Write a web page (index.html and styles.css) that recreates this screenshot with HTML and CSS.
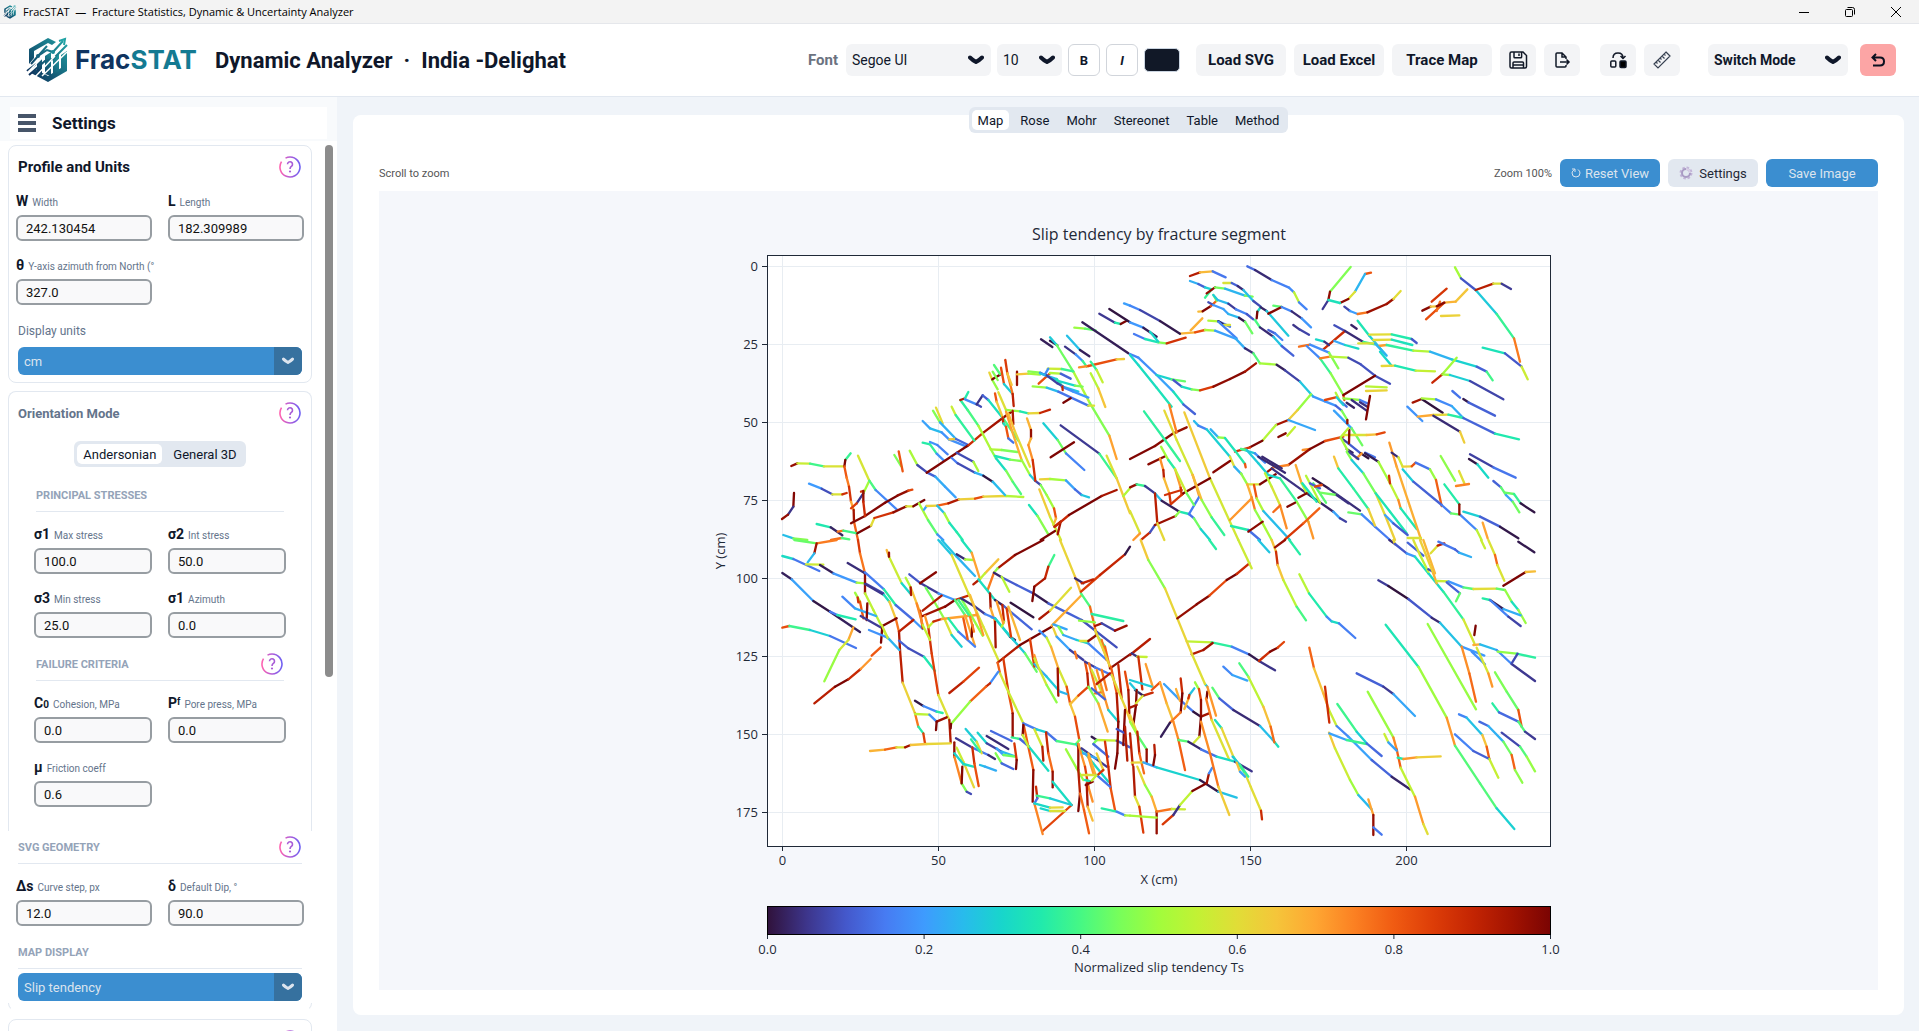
FILE: index.html
```html
<!DOCTYPE html>
<html lang="en">
<head>
<meta charset="utf-8">
<title>FracSTAT — Fracture Statistics, Dynamic &amp; Uncertainty Analyzer</title>
<link rel="stylesheet" href="styles.css">
</head>
<body>
<svg width="0" height="0" class="defs" aria-hidden="true">
  <defs>
    <linearGradient id="brand" x1="0" y1="1" x2="1" y2="0"><stop offset="0" stop-color="#0c2c58"/><stop offset="1" stop-color="#22a3a5"/></linearGradient>
    <linearGradient id="help-ring" x1="0" y1="0" x2="1" y2="0"><stop offset="0" stop-color="#ff63b0"/><stop offset=".5" stop-color="#b05cd8"/><stop offset="1" stop-color="#6f60f2"/></linearGradient>
    <symbol id="logo" viewBox="0 0 46 46">
      <path d="M4 12 23 1l8 4-4 3-4-2L9 14v7l-5 6zM42 14v20L23 45 6 36l4-4 13 7 13-8V18z" fill="url(#brand)"/>
      <path d="M12 26l5-4v15l-5-3zM20 19l6-4v24l-6-2zM28 21l6-5v18l-6 4z" fill="url(#brand)"/>
      <path d="M6 27 22 9m-20 25 9-7m2-8 9-6 6 2 10-11M4 38 20 24l8-2 14-14" fill="none" stroke="url(#brand)" stroke-width="2"/>
      <path d="M1 37 19 19M17 39l25-24M9 41 30 19" stroke="#fff" stroke-width="1.500"/>
      <path d="M34 4l6-2-1 6" fill="none" stroke="#22a3a5" stroke-width="2"/>
      <circle cx="13" cy="19" r="2" fill="#18627f"/><circle cx="28" cy="15" r="2" fill="#1b8a98"/>
    </symbol>
    <symbol id="chevron" viewBox="0 0 16 10"><path d="M2 2.500Q5 5.500 8 7 11 5.500 14 2.500" fill="none" stroke="currentColor" stroke-width="4" stroke-linecap="round" stroke-linejoin="round"/></symbol>
    <symbol id="help" viewBox="0 0 22 22">
      <path d="M5.600 2.500A10 10 0 1 0 11 1Q9 1 7.600 1.600M3.500 4.500 2.600 5.600" fill="none" stroke="none"/>
      <path d="M6.500 2.100A10 10 0 0 1 11 1a10 10 0 1 1-8.500 4.700" fill="none" stroke="url(#help-ring)" stroke-width="1.600"/>
      <path d="M8.500 8.300a2.500 2.500 0 1 1 4 2Q11 11.200 11 13" fill="none" stroke="#a85cd6" stroke-width="1.600"/><circle cx="11" cy="15.500" r="1.100" fill="#a85cd6"/>
    </symbol>
  </defs>
</svg>

<div class="titlebar">
  <svg class="titlebar-icon"><use href="#logo"/></svg>
  <span class="titlebar-text">FracSTAT &nbsp;—&nbsp; Fracture Statistics, Dynamic &amp; Uncertainty Analyzer</span>
  <div class="window-controls">
    <button aria-label="Minimize"><svg width="12" height="12" viewBox="0 0 12 12"><path d="M1 6.500h10" stroke="#000"/></svg></button>
    <button aria-label="Restore"><svg width="12" height="12" viewBox="0 0 12 12" fill="none" stroke="#000"><rect x="1.500" y="3.500" width="7" height="7" rx="1"/><path d="M3.500 1.500h5q2 0 2 2v5"/></svg></button>
    <button aria-label="Close"><svg width="12" height="12" viewBox="0 0 12 12"><path d="M1 1l10 10M11 1 1 11" stroke="#000"/></svg></button>
  </div>
</div>

<header class="header">
  <div class="brand">
    <svg class="brand-mark"><use href="#logo"/></svg>
    <span class="brand-name">Frac<span class="brand-stat">STAT</span></span>
  </div>
  <h1 class="page-title">Dynamic Analyzer &nbsp;·&nbsp; India -Delighat</h1>
  <div class="toolbar">
    <div class="tool-group tool-font">
      <label class="font-label" for="font">Font</label>
      <div class="combo combo-font"><select id="font"><option>Segoe UI</option></select><svg><use href="#chevron"/></svg></div>
      <div class="combo combo-size"><select aria-label="Font size"><option>10</option></select><svg><use href="#chevron"/></svg></div>
      <button class="style-btn">B</button>
      <button class="style-btn italic">I</button>
      <button class="swatch" aria-label="Font colour"></button>
    </div>
    <div class="tool-group">
      <button class="tool">Load SVG</button>
      <button class="tool">Load Excel</button>
      <button class="tool tool-wide">Trace Map</button>
      <button class="tool tool-icon" aria-label="Save"><svg width="20" height="20" viewBox="0 0 20 20" fill="none" stroke="#111827" stroke-width="1.500"><path d="M2 3.500Q2 2 3.500 2H15l3.500 3.500V16.500Q18.500 18 17 18H3.500Q2 18 2 16.500zM6 2v5q0 .8.800.800h6q.8 0 .8-.8V2M11 3.500V6M5 18v-5q0-1 1-1h8.500q1 0 1 1v5M5 15h10"/></svg></button>
      <button class="tool tool-icon" aria-label="Export"><svg width="18" height="18" viewBox="0 0 18 18" fill="none" stroke="#111827" stroke-width="1.500"><path d="M13 8V6L9 2H4Q3 2 3 3v12q0 1 1 1h8q1 0 1-1v-1M9 2v4h4M7 11h9M13.500 8.500 16 11l-2.500 2.500"/></svg></button>
    </div>
    <div class="tool-group tool-edit">
      <button class="tool tool-icon" aria-label="Swap"><svg width="18" height="18" viewBox="0 0 18 18" fill="none" stroke="#111827" stroke-width="1.500"><rect x="1.800" y="10" width="5" height="6" rx="1"/><rect x="11" y="10" width="6" height="6.500" rx="1" fill="#000"/><path d="M4 7q0-5 5-5t5 5M11.500 5 14 7.500 16.500 5"/></svg></button>
      <button class="tool tool-icon" aria-label="Measure"><svg width="20" height="20" viewBox="0 0 20 20" fill="none" stroke="#374151" stroke-width="1.200"><path d="M14 2l4 4L6 18l-4-4zM12 4l1.500 1.500M10 6l2.500 2.500M8 8l1.500 1.500M6 10l2.500 2.500M4 12l1.500 1.500"/></svg></button>
    </div>
    <div class="tool-group tool-end">
      <div class="combo combo-mode"><select aria-label="Mode"><option>Switch Mode</option></select><svg><use href="#chevron"/></svg></div>
      <button class="tool tool-icon undo" aria-label="Undo"><svg width="16" height="16" viewBox="0 0 16 16" fill="none" stroke="#0b1120" stroke-width="2"><path d="M6 2 2.500 5.500 6 9M3 5.500h7q4 0 4 4t-4 4H3"/></svg></button>
    </div>
  </div>
</header>

<div class="body">
  <aside class="sidebar">
    <div class="side-head">
      <button class="menu" aria-label="Toggle settings"><span></span><span></span><span></span></button>
      <h2>Settings</h2>
    </div>
    <div class="side-scroll">
      <div class="side-content">
        <section class="group">
          <div class="group-head"><h3 class="strong">Profile and Units</h3><button class="help" aria-label="Help"><svg><use href="#help"/></svg></button></div>
          <div class="fields">
            <div class="field"><label for="w"><b>W</b>Width</label><input id="w" value="242.130454"></div>
            <div class="field"><label for="l"><b>L</b>Length</label><input id="l" value="182.309989"></div>
            <div class="field"><label for="az"><b>θ</b>Y-axis azimuth from North (°</label><input id="az" value="327.0"></div>
          </div>
          <label class="select-label" for="units">Display units</label>
          <div class="dropdown"><select id="units"><option>cm</option></select><span class="drop-arrow"><svg><use href="#chevron"/></svg></span></div>
        </section>
        <section class="group group-open">
          <div class="group-head"><h3>Orientation Mode</h3><button class="help" aria-label="Help"><svg><use href="#help"/></svg></button></div>
          <div class="segmented mode-switch"><button class="on">Andersonian</button><button>General 3D</button></div>
          <div class="inset">
            <div class="subhead"><h4>PRINCIPAL STRESSES</h4></div>
            <div class="fields">
              <div class="field"><label for="s1"><b>σ1</b>Max stress</label><input id="s1" value="100.0"></div>
              <div class="field"><label for="s2"><b>σ2</b>Int stress</label><input id="s2" value="50.0"></div>
              <div class="field"><label for="s3"><b>σ3</b>Min stress</label><input id="s3" value="25.0"></div>
              <div class="field"><label for="s1a"><b>σ1</b>Azimuth</label><input id="s1a" value="0.0"></div>
            </div>
            <div class="subhead"><h4>FAILURE CRITERIA</h4><button class="help" aria-label="Help"><svg><use href="#help"/></svg></button></div>
            <div class="fields">
              <div class="field"><label for="c0"><b>C<small>0</small></b>Cohesion, MPa</label><input id="c0" value="0.0"></div>
              <div class="field"><label for="pf"><b>Pᶠ</b>Pore press, MPa</label><input id="pf" value="0.0"></div>
              <div class="field"><label for="mu"><b>μ</b>Friction coeff</label><input id="mu" value="0.6"></div>
            </div>
          </div>
          <div class="plain">
            <div class="subhead"><h4>SVG GEOMETRY</h4><button class="help" aria-label="Help"><svg><use href="#help"/></svg></button></div>
            <div class="fields">
              <div class="field"><label for="ds"><b>Δs</b>Curve step, px</label><input id="ds" value="12.0"></div>
              <div class="field"><label for="dip"><b>δ</b>Default Dip, °</label><input id="dip" value="90.0"></div>
            </div>
            <div class="subhead"><h4>MAP DISPLAY</h4></div>
            <div class="dropdown"><select aria-label="Map display"><option>Slip tendency</option></select><span class="drop-arrow"><svg><use href="#chevron"/></svg></span></div>
          </div>
        </section>
        <section class="group">
          <div class="group-head"><h3></h3><button class="help" aria-label="Help"><svg><use href="#help"/></svg></button></div>
        </section>
      </div>
      <div class="scrollbar"><div class="thumb"></div></div>
    </div>
  </aside>

  <main class="main">
    <div class="card">
      <nav class="segmented tabs"><button class="on">Map</button><button>Rose</button><button>Mohr</button><button>Stereonet</button><button>Table</button><button>Method</button></nav>
      <div class="view-bar">
        <span class="hint">Scroll to zoom</span>
        <span class="zoom">Zoom 100%</span>
        <button class="action reset"><svg width="10" height="10" viewBox="0 0 10 10" fill="none" stroke="#dce4ee"><path d="M1 1h3v3M7 1.500Q9 3 9 5a4 4 0 0 1-8 0Q1 3 3.500 1.500"/></svg>Reset View</button>
        <button class="action quiet"><svg width="14" height="14" viewBox="0 0 14 14" fill="none"><circle cx="7" cy="7" r="5.500" stroke="#c3b5d8" stroke-width="2" stroke-dasharray="2.500 1.800"/><circle cx="7" cy="7" r="4" stroke="#a99bc4" stroke-width="2"/><path d="M7 3a4 4 0 0 1 4 4" stroke="#d8cfe6" stroke-width="2"/></svg>Settings</button>
        <button class="action save">Save Image</button>
      </div>
      <div class="plot">
        <svg id="chart" viewBox="0 0 1499 799" role="img" aria-label="Slip tendency by fracture segment">
          <defs><linearGradient id="ramp"></linearGradient></defs>
          <rect class="plot-area" x="388.500" y="64.500" width="783" height="591"/>
          <g id="grid"></g>
          <g id="traces"></g>
          <rect class="frame" x="388.500" y="64.500" width="783" height="591"/>
          <rect class="bar" x="388.500" y="715.500" width="783" height="28" fill="url(#ramp)"/>
          <g id="labels">
            <text class="title" x="780" y="49">Slip tendency by fracture segment</text>
            <text x="780" y="693">X (cm)</text>
            <text x="780" y="781">Normalized slip tendency Ts</text>
            <text transform="translate(346 360) rotate(-90)">Y (cm)</text>
          </g>
        </svg>
      </div>
    </div>
  </main>
</div>
<script src="chart.js"></script>
</body>
</html>
```
FILE: styles.css
```css
* { box-sizing: border-box; }
body { margin: 0; height: 100vh; display: flex; flex-direction: column; overflow: hidden; background: #f0f4f9; color: #0f172a; font-family: Roboto, "Liberation Sans", sans-serif; font-size: 13px; }
button, input, select { font: inherit; color: inherit; margin: 0; border: 0; padding: 0; background: none; }
select { appearance: none; width: 100%; height: 100%; }
h1, h2, h3, h4 { margin: 0; }
.defs { position: absolute; }

.titlebar { flex: none; display: flex; align-items: center; height: 24px; padding-left: 3px; background: #f3f3f3; border-bottom: 1px solid #e5e7eb; color: #000; font-family: "Open Sans", "Noto Sans", sans-serif; font-size: 11px; }
.titlebar-icon { width: 14px; height: 14px; margin-right: 6px; }
.window-controls { display: flex; margin-left: auto; height: 100%; }
.window-controls button { width: 46px; display: grid; place-items: center; }

.header { flex: none; display: flex; align-items: center; height: 73px; padding: 0 23px 0 25px; background: #fff; border-bottom: 1px solid #e2e8f0; }
.brand { display: flex; align-items: center; gap: 4px; }
.brand-mark { width: 46px; height: 46px; }
.brand-name { width: 121px; font-family: Inter, sans-serif; font-weight: 700; font-size: 26px; line-height: 30px; color: #0f3460; }
.brand-stat { color: #147a92; }
.page-title { margin-left: 19px; font-size: 22px; font-weight: 700; white-space: nowrap; }
.toolbar { display: flex; align-items: center; gap: 16px; margin-left: auto; }
.tool-group { display: flex; align-items: center; gap: 8px; }
.tool-font { gap: 6px; }
.tool-edit { margin-left: 4px; }
.tool-end { gap: 12px; margin-left: 12px; }
.font-label { margin-right: 2px; font-size: 15px; font-weight: 700; color: #6b7280; }
.combo { position: relative; height: 32px; border-radius: 6px; background: #f3f4f6; }
.combo select { padding-left: 6px; font-size: 14px; }
.combo svg { position: absolute; right: 7px; top: 11px; width: 16px; height: 10px; pointer-events: none; }
.combo-font { width: 145px; }
.combo-size { width: 65px; }
.combo-mode { width: 140px; }
.combo-mode select { font-weight: 700; }
.style-btn { width: 32px; height: 32px; border: 1px solid #d1d5db; border-radius: 6px; font-weight: 700; }
.italic { font-style: italic; }
.swatch { width: 36px; height: 24px; border: 1px solid #cbd5e1; border-radius: 5px; background: #111827; }
.tool { width: 90px; height: 32px; border-radius: 6px; background: #f3f4f6; font-size: 15px; font-weight: 700; white-space: nowrap; }
.tool-wide { width: 100px; }
.tool-icon { width: 36px; display: grid; place-items: center; }
.undo { background: #fca5a5; }

.body { flex: 1; min-height: 0; display: flex; }
.sidebar { flex: none; width: 337px; display: flex; flex-direction: column; background: #fff; }
.side-head { flex: none; display: flex; align-items: center; height: 44px; gap: 16px; padding-left: 8px; background: #fff; border: solid #f8fafc; border-width: 10px 10px 2px; }
.side-head h2 { font-size: 17px; line-height: 20px; }
.menu { display: grid; gap: 3px; width: 18px; }
.menu span { height: 4px; background: #475569; }
.side-scroll { flex: 1; min-height: 0; display: flex; padding: 4px 4px 0 8px; gap: 13px; overflow: hidden; }
.side-content { width: 304px; display: flex; flex-direction: column; gap: 8px; }
.scrollbar { width: 8px; }
.thumb { height: 60%; border-radius: 4px; background: #8c8c8c; }
.group { flex: none; padding: 10px 7px 7px; border: 1px solid #e2e8f0; border-radius: 8px; background: #fff; }
.group-open { border-bottom-color: transparent; }
.group-head { display: flex; justify-content: space-between; align-items: center; height: 22px; padding: 0 3px 0 2px; }
h3 { font-size: 13px; color: #64748b; }
h3.strong { font-size: 15px; color: #0f172a; }
.help { width: 22px; height: 22px; }
.help svg { display: block; width: 22px; height: 22px; }
.fields { display: grid; grid-template-columns: 1fr 1fr; gap: 16px; margin-top: 15px; }
.field { display: grid; grid-template-columns: minmax(0, 1fr); gap: 6px; }
.field label { height: 16px; line-height: 16px; white-space: nowrap; font-size: 10px; color: #64748b; }
.field b { margin-right: 4px; font-size: 14px; color: #0f172a; }
.field small { font-size: 10px; }
.field input { width: 100%; height: 26px; padding: 0 8px; border: 2px solid #979da2; border-radius: 6px; background: #f9f9fa; color: #111; }
.select-label { display: block; height: 18px; margin: 17px 2px 7px; line-height: 18px; font-size: 12px; color: #64748b; }
.dropdown { position: relative; height: 28px; margin: 0 2px; border-radius: 6px; overflow: hidden; background: #3b8ed0; color: #dce4ee; }
.dropdown select { padding-left: 6px; font-size: 13px; }
.drop-arrow { position: absolute; top: 0; right: 0; width: 28px; height: 28px; display: grid; place-items: center; background: #36719f; pointer-events: none; }
.drop-arrow svg { width: 12px; height: 8px; }
.segmented { display: flex; gap: 5px; width: max-content; height: 26px; padding: 3px; border-radius: 6px; background: #e2e8f0; }
.segmented button { padding: 0 6px; border-radius: 5px; }
.segmented .on { background: #fff; }
.mode-switch { margin: 17px auto; }
.inset { padding: 0 18px; }
.subhead { display: flex; justify-content: space-between; align-items: center; height: 28px; margin: 15px 2px 0; padding-right: 1px; padding-bottom: 5px; border-bottom: 1px solid #e2e8f0; }
.subhead + .fields { margin-top: 14px; }
h4 { font-size: 11px; color: #94a3b8; }
.plain { margin: 24px -8px 0; padding: 5px 8px 2px; background: #fff; }
.plain .subhead:first-child { margin-top: 0; }
.plain .dropdown { margin-top: 4px; }

.main { flex: 1; min-width: 0; padding: 18px 15px 16px 16px; }
.card { height: 100%; display: flex; flex-direction: column; padding: 0 26px 25px; border-radius: 8px; background: #fff; }
.tabs { align-self: center; margin-top: -8px; flex: none; }
.view-bar { flex: none; display: flex; align-items: center; gap: 8px; margin: 26px 0 4px; font-size: 11px; color: #555; }
.hint { margin-right: auto; }
.action { display: flex; align-items: center; justify-content: center; gap: 4px; height: 28px; width: 100px; border-radius: 6px; background: #3b8ed0; color: #dce4ee; font-size: 13px; }
.quiet { width: 90px; gap: 6px; background: #e2e8f0; color: #1f2937; }
.save { width: 112px; }
.plot { flex: 1; min-height: 0; background: #f5f7fb; }
.plot svg { display: block; width: 100%; height: 100%; }
.plot text { font-family: "Open Sans", "Noto Sans", sans-serif; font-size: 13px; fill: #1f2937; text-anchor: middle; }
.plot .title { font-size: 16px; }
.plot .end { text-anchor: end; }
.plot-area { fill: #fff; }
.frame { fill: none; stroke: #1f2937; }
.bar { stroke: #000; }
.grid-line { stroke: #e8edf2; }
.tick { stroke: #1f2937; }
#traces line { stroke-width: 7; stroke-linecap: round; }
```
FILE: chart.js
```js
// Turbo colour ramp, sampled every 0.05
const RAMP = ['#30123b', '#3d358b', '#4458cb', '#477bf2', '#3e9bfe', '#28bbec', '#18d6cb', '#21eaac', '#46f884', '#78fe5a', '#a2fc3c', '#c3f134', '#e1dd37', '#f5c53a', '#fea632', '#fb8022', '#f05b12', '#dd3d08', '#c42503', '#a31301', '#7a0403'];
const NS = 'http://www.w3.org/2000/svg';
const S1 = 100, S3 = 25, S1_ANGLE = -57 * Math.PI / 180;

function add(parent, name, attrs, text) {
  const el = document.createElementNS(NS, name);
  for (const key in attrs) el.setAttribute(key, attrs[key]);
  if (text !== undefined) el.textContent = text;
  parent.appendChild(el);
}

// Slip tendency of a vertical plane with the given trace direction, 0 to 1
function slip(dx, dy) {
  const phi = 2 * (Math.atan2(dy, dx) - S1_ANGLE);
  const r = (S1 - S3) / 2, m = (S1 + S3) / 2;
  return Math.min(1, Math.abs(r * Math.sin(phi)) / (m - r * Math.cos(phi)) / 0.75);
}

function colour(t) {
  const p = t * 20, i = Math.min(19, Math.floor(p)), f = p - i;
  const rgb = c => [1, 3, 5].map(k => parseInt(c.substr(k, 2), 16));
  const a = rgb(RAMP[i]), b = rgb(RAMP[i + 1]);
  return `rgb(${a.map((v, k) => Math.round(v + (b[k] - v) * f)).join(',')})`;
}

// Digitised traces by map quadrant, in thirds of a plot unit from each origin
const QUADRANTS = [
  { origin: [321, 19], traces: `
274 768 292 760 330 761 372 769 433 769;452 730 436 750 433 769 440 803 447 830 453 875 461 900 462 935 474 990
327 821 365 836 397 853 427 853 440 849;282 849 280 890 264 914 246 927
474 737 508 812 490 850 470 880 453 895;508 812 527 840 590 898
453 940 495 918 555 878 592 857 625 842 637 839;483 845 490 843;490 843 490 875 495 918
350 942 392 952 427 976;393 990 425 984;425 984 448 988
413 965 430 962 472 970 513 947 523 924 580 907 619 889 640 889 673 870
583 735 603 768;596 724 608 784;629 722 652 765 682 788 706 800 735 830 767 862
657 880 684 930 712 973 730 990;672 899 680 888 712 887 745 880 777 868 825 866 850 860 918 858 970 861
712 887 733 910 748 938 770 966 788 990;250 975 280 985 322 990
668 633 690 655 725 667 747 688 800 710;708 593 728 640;699 602 720 637 768 687;748 688 768 687 805 705
668 698 690 703 710 731 732 752;690 696 712 705 743 733;680 788 805 706 850 668 908 624 938 603
770 728 820 755 835 783;755 744 773 760 825 788 850 797 878 815 915 855
755 590 767 615 823 692;781 570 803 600 835 647 872 717 888 745 918 782 938 815 963 852
781 570 795 565 805 546;795 568 830 583 843 590;830 583 848 556;848 556 865 570 910 626 955 692
872 718 905 720 952 726;885 738 930 749 963 753;868 488 877 510 893 538;877 508 900 494;878 485 893 510;882 465 900 492
903 473 912 522 938 552;916 450 922 490 938 552 941 588;922 490 935 525;951 485 951 525;951 493 985 491 1020 494
895 547 918 600 960 604 985 610 1020 609 1050 599;885 550 890 575 908 622 910 640 918 650 925 685 940 698
938 603 940 642;925 610 945 665 990 770;918 605 935 660 965 750 990 795 1005 812 1022 825 1040 855 1062 895 1068 925 1060 945
981 625 993 660 993 685 985 705 998 750 1006 812;1030 640 1073 690 1098 730 1153 780
1082 646 1198 731;1198 731 1250 805;1052 742 1122 697;1020 808 1050 807 1098 811 1125 838 1145 855 1167 862
1018 838 1050 920 1083 990;987 885 1012 917 1045 973;1022 990 1065 963;1063 950 1082 935;1082 935 1073 973;1065 950 1107 915 1205 858 1250 840
1250 805 1270 858 1290 910;1270 858 1290 835;1220 737 1250 805;1023 388 1057 411;1050 392 1072 406
1050 382 1070 405 1120 485 1170 580 1228 677 1250 747;1123 353 1155 356 1187 361;1147 337 1285 430
1198 311 1245 338 1262 342 1280 332;1228 297 1290 337;1272 280 1290 287;1101 377 1140 420 1168 439
1095 410 1127 433 1148 453 1160 470;1137 472 1165 468 1250 448 1272 447;1172 455 1190 480 1208 517;1172 490 1195 535 1216 591
1043 476 1085 477 1120 484;1035 493 1045 476;1016 521 1050 490;1050 489 1082 491 1112 506
985 484 1020 488 1065 510 1125 527 1148 530;1020 490 1070 507 1088 530 1135 545;1040 496 1072 520 1090 530
998 529 1040 533 1075 545 1165 587 1182 587;1085 530 1120 545 1165 563;1090 578 1112 565;1087 530 1088 540` },
  { origin: [751, 19], traces: `
180 198 210 187 248 184 287 202;180 213 205 222 225 232 245 238;225 263 245 238;230 250 255 232;255 232 285 236 345 257 368 260
280 219 305 219 323 228 340 240 370 273 392 290;205 305 218 304 243 288;243 288 260 272 250 255;250 255 263 270 295 281 318 298 350 312 370 328
235 277 250 285 280 297 295 312 327 323 345 335 367 370;182 361 217 325;235 332 265 334 300 350;265 334 282 345 300 345;265 335 320 385
352 169 375 180 425 210 477 233 492 247 507 277 530 298;392 292 382 305 380 325;375 330 390 352 430 380 455 408 490 437
392 292 410 303 475 377;415 360 435 370 457 390;430 287 455 291;415 311 455 291;455 291 485 304 515 325 543 352
490 345 508 358 537 374;150 371 195 367 225 360 255 362 317 386 345 415 370 430 390 460 440 464 465 481 510 515 550 560 585 574 617 587 635 602 652 630
0 287 30 300 90 333 150 371;0 337 40 353 80 380;12 372 45 387 85 397 110 400 167 383;60 365 85 395
0 432 25 443 80 495 130 545;0 435 25 465 80 533 125 590;80 495 125 508 165 514;130 510 155 530 185 538 210 541 250 530 300 507 345 485 378 460
130 545 160 583 195 612;662 171 600 245;600 245 595 270;595 270 578 297;723 188 705 192 675 245 655 267 630 279 595 270
643 290 660 303 683 312 712 307 770 282 790 267 812 243;613 346 645 363;645 363 580 418;645 363 700 396 735 403
664 345 680 356;683 332 718 377 765 432;718 374 785 373 845 387 860 399;730 390 785 389 847 405
685 400 735 400;745 408 770 405 850 422 900 425 965 448 1040 470 1070 485 1088 511;735 400 770 437;750 425 785 467
755 468 795 467 857 482 915 484;558 388 583 395 597 405;613 393 645 405 685 416;507 410 540 404;540 404 597 428 625 475
530 408 570 445 602 490 640 555 643 570;570 445 600 440 655 443 692 463 735 497 780 521;640 555 735 497
585 570 617 562;708 529 770 532;708 543 770 541;617 548 630 573 650 590;640 565 690 570 712 580;620 562 640 585
650 578 672 593;665 570 710 602;690 577 712 590;720 558 708 628;612 602 665 655 697 706;652 630 652 640
543 553 503 600 475 630;475 630 438 645 397 692 360 712 315 725;475 630 555 660;445 681 467 670;472 677 495 651
518 720 540 717;475 765 540 717 585 693 640 680;640 675 710 675 740 673 764 667;632 683 655 700 692 730 715 745
658 660 657 700;655 655 633 680;650 717 668 728;705 728 735 742;680 745 695 730;632 683 655 725 685 747
410 787 430 772 475 765;192 633 205 647 230 658;230 658 300 740 313 770 335 793;242 658 265 682 285 684 315 722 345 762 347 772
333 717 375 730 405 758;385 740 465 788;397 740 455 775;0 747 75 708 130 670 170 652;250 787 300 753;55 763 107 738
42 604 105 690 150 753;103 602 140 690 188 795 208 860;118 585 140 668;163 607 240 805 325 990
93 710 115 750 135 777 152 833 155 855;90 745 100 780 102 805 118 850 122 880;122 883 160 850 240 805;105 855 155 840
0 832 20 823 45 828 75 850 95 872 148 905 177 912 192 925 212 957 240 990;0 903 30 970 10 990;35 988 60 967 75 945 137 918 148 905
75 850 82 940 103 990;208 860 177 912;135 777 170 850 192 885;188 795 215 870 245 922 283 975
333 790 352 823 390 823 437 793;352 823 365 862 375 900 398 940 425 990;372 825 380 865 400 903 480 990
365 865 300 930;303 948 355 960 390 990;355 965 398 935;333 717 350 720 385 760 415 795 450 805 500 875 535 935 550 985
405 790 425 830 450 885 470 955;430 906 450 887;425 775 530 850 610 905 630 925 648 935
497 765 515 820 530 850;517 820 560 875;528 797 570 878;550 820 588 878;548 805 595 835 690 902
540 820 570 835;505 863 530 850;555 830 575 825;472 890 495 878;570 848 620 855 655 880;465 988 520 940 568 895
655 907 695 913 735 950 780 990;612 740 625 775 670 835 715 897 735 947;650 725 665 750 700 790 737 850 765 915 795 990
705 730 745 755 775 810 805 870 812 895 860 957;777 797 780 820;737 850 780 905 830 970;765 915 790 940 833 975
778 698 800 770 840 890 873 988;833 984 873 984;785 728 805 742 818 770 845 769 857 758 900 778 918 810 935 888
818 778 850 815 935 885 963 910 990 914 1040 960 1055 990;943 823 988 883 988 913;1000 905 1050 920 1110 950 1165 985
1058 938 1073 985;975 172 993 205 1037 240;1037 240 1100 312 1152 385 1170 455;1058 413 1125 430 1175 470 1193 508
1037 240 1090 221 1115 221 1143 237;1012 238 977 275 943 278 888 328;930 275 920 303;905 275 950 236;877 302 902 290 920 289 943 278
933 318 988 316;980 443 937 493;937 493 907 518;937 493 960 495 1020 513 1120 568;967 543 990 563;1000 567 1015 577 1095 617
848 578 875 567;875 567 938 608;875 565 918 568 965 588 1000 624;832 590 877 633;863 620 910 615 955 614 1000 624 1095 671 1167 688
910 617 990 665 1003 698;1020 733 1090 772 1157 803;1017 747 1042 763 1075 803;932 738 975 812;987 783 1003 820;978 828 1017 822
1090 813 1113 832 1128 855 1148 875 1168 907;1125 848 1152 852 1172 880 1213 907` },
  { origin: [321, 349], traces: `
283 0 350 10 410 0;350 10 343 40 323 67;247 48 280 57 358 93;318 73 370 74;360 75 400 100 470 128 495 130 550 160
247 99 275 118 340 183 390 215 480 276;390 215 412 225 467 238;247 263 268 258 330 270 390 288 468 324;460 262 445 300 418 330 373 424
343 490 405 440 445 418 482 387 512 357;515 347 542 322;474 0 480 40 495 100 495 160 520 210 563 295;560 30 567 50 605 130 630 160;567 38 567 50
443 69 495 100;495 97 552 148 587 195 640 240 668 267;495 132 552 165 568 185 587 235 597 275 600 330 608 428 645 520 655 560 670 580 675 610
465 158 480 185 490 235;427 170 465 205 528 228;473 172 475 187;502 190 500 240;482 228 547 265;590 235 547 258 543 308
507 270 563 293 598 330;563 293 545 255;597 275 640 240;597 302 625 325 672 350 705 393;628 103 662 130 715 160 765 180
617 113 632 142 665 230;632 142 633 165;660 130 708 97;677 143 700 180 735 240 755 285 785 320;668 212 725 167;668 228 735 200 765 180 805 167
675 228 685 262 695 340 715 465 748 540 752 608;660 212 668 265;650 190 668 255 690 300;685 262 700 245 725 237 830 225
715 0 755 45 805 160 850 260 895 360;725 0 770 50 825 108;770 43 795 58 820 60;785 0 815 38 840 117;840 117 820 133
895 58 855 100 840 117;893 85 945 45 1030 0;893 85 882 98 863 150;882 98 905 112 950 135 1000 160 1045 190 1095 215 1145 240 1250 322
905 110 928 155;1063 45 1045 80 1035 115 1003 140 997 183;1018 237 1050 212 1113 143;835 118 885 180;875 232 885 235 930 290 945 300
870 160 872 205 885 245 887 322;932 188 1000 232;885 180 910 197 995 268;765 180 795 225 825 318
783 175 810 220 848 287;783 175 825 200 855 222 885 235 940 300 975 340 1010 395;745 235 775 275 825 320;810 165 830 220 850 285
790 235 803 297;817 255 815 290;775 180 810 230 822 275;907 195 912 245 905 260;890 185 910 250;920 205 933 290;925 200 960 300
893 368 960 315 1055 260;1018 272 1040 293 1053 320 1075 385 1100 440 1110 490;1145 165 1055 257;1080 0 1125 110 1143 160 1170 200 1190 285 1215 320 1230 385
1125 115 1150 130;1143 155 1200 105 1275 43;1275 43 1290 20;1145 130 1180 118;1175 222 1270 243;1137 242 1185 247
1185 258 1205 250 1245 272;1245 272 1280 257;1060 253 1100 268;1075 260 1090 285 1130 300 1165 310 1220 360;1060 265 1070 290 1110 330 1150 360
1125 335 1130 355;1140 303 1165 303 1190 285;1205 300 1220 360;1185 270 1210 330 1230 380;1230 385 1290 343
990 297 1003 380;1003 345 1015 385;1003 372 1040 410 1075 450;1003 355 1040 435 1070 487;1073 385 1075 467;1080 455 1100 462
1110 493 1135 467;1135 467 1165 440;1110 490 1125 530 1138 600 1128 612;910 355 925 455 938 520 938 590
893 368 900 400 925 455 970 550 985 620 1000 690 998 785;895 395 870 430;870 430 858 440 810 485;810 485 753 552 752 565
748 459 790 425 837 383;645 482 670 498 710 515 728 519;645 522 688 524 710 545;710 545 740 532;710 545 708 570
510 633 555 629 590 622 615 622 632 615 680 612 752 610;763 607 763 650 785 730 800 755 813 762;768 595 815 622 865 645 885 657
797 567 830 605 845 640;770 623 790 665 822 742;763 640 790 672 820 680;787 680 785 730;817 622 823 670 836 738;813 598 840 635
833 578 860 610 905 635 943 648;860 588 925 627;873 573 935 603;935 592 960 597 985 618 1045 692;887 640 905 670 940 687;890 625 910 645 945 650
840 675 855 680 888 692;943 610 950 660 948 687;970 550 1010 568 1040 577 1070 603 1125 613;970 555 968 585;968 585 985 620
1003 568 1027 620 1030 662;1038 577 1045 640 1058 695 1058 742;1058 725 1115 795;1115 795 1028 873;1003 790 1028 882;1008 740 1012 775 1003 790
1010 767 1050 775 1115 795;1003 790 1050 803 1088 802;1022 805 1050 813 1095 813;1098 628 1130 685 1150 720;1128 612 1150 640
1135 612 1135 690 1140 760 1135 813;1135 612 1155 680 1165 740 1178 785;1140 760 1152 810 1167 880;1160 730 1163 800 1178 842
1175 590 1190 600 1250 602 1290 622;1190 600 1180 612 1225 650;1145 625 1220 680;1155 640 1225 725;1150 640 1190 655
1155 365 1162 400 1165 440;1155 365 1185 382 1235 405;1167 370 1190 460;1175 390 1215 478;1190 390 1225 510 1255 545;1205 390 1220 450
1185 460 1202 457;1175 445 1215 478;1230 400 1190 432;1165 440 1195 490 1223 575;1233 380 1250 460 1255 545;1255 375 1265 475
1275 395 1285 450 1288 520;1235 405 1275 500 1290 540;1255 545 1252 640 1245 686;1275 510 1270 615;1250 567 1275 580;1275 560 1282 662
1215 605 1225 680 1232 745 1245 810;1205 805 1250 815 1275 826 1290 827;1165 650 1180 700;1145 705 1190 705 1230 740;1155 720 1175 725
1157 735 1178 725;1190 705 1175 722;1165 640 1185 700;1190 640 1210 690;1210 690 1195 703` },
  { origin: [751, 349], traces: `
0 345 60 297;5 340 22 350;22 350 50 351;25 350 37 448;47 372 68 440;68 458 40 467 15 450;0 420 65 440;0 430 22 455
65 450 90 427;90 427 110 490 130 545 145 598 165 690;20 450 18 495 10 555;0 503 20 495;0 525 22 580;0 545 22 585 50 628;50 628 50 670
22 575 28 640 42 700;0 580 8 675;38 468 18 490;5 668 40 667 80 682 210 720 265 755 320 773;10 680 15 770 28 800 40 878;22 680 45 735 65 770 80 815
80 815 80 880;73 615 75 645 70 675;80 815 125 807 165 808;98 853 130 825 150 795;150 795 187 753;187 753 230 730;230 730 237 700 247 683
0 827 80 833;102 432 145 475 190 515 213 530;213 530 237 520;138 447 150 483;152 415 157 460 152 517;152 517 120 548;120 548 93 590
163 507 178 470;193 445 178 465 175 475;195 427 205 445;207 447 213 480 213 530 208 590;208 590 190 610;232 455 230 475
225 432 232 440 258 527;228 475 245 540 298 660;145 600 175 605 213 628 260 650 315 665 365 694;213 545 240 640 265 740 298 825
255 540 275 565;275 565 310 650 345 700 362 740 393 812 396 838;247 443 268 475 310 510 390 558 433 605 445 620
308 650 330 675 355 710;320 668 330 695 345 710;280 380 307 405 352 422;328 370 355 410 400 500 422 560 433 607
170 304 245 307 305 320 357 343 387 363 435 391;387 363 420 335 443 323 462 306;185 343 220 330 248 309
32 0 55 60 105 145 142 235 187 345 225 432;142 235 200 193 238 167 290 120 320 102 358 70
325 0 365 85;238 0 258 27;385 0 418 37;425 0 438 35 443 75 460 120 500 200 528 241;435 22 465 0;478 0 510 43
508 103 537 160 590 230;590 230 605 244 627 250;627 250 676 294;538 323 552 385 580 460 597 510 620 558;620 558 655 590 725 660 785 710 840 748
585 440 598 548;597 578 615 625 660 720 685 765 725 808;598 580 650 600 710 612;715 778 730 825 730 885;730 862 755 884
622 492 680 575 710 610 755 648;713 455 790 592 800 628 812 683 855 770 880 852 893 882;763 582 775 607 800 632;803 653 820 657;820 657 860 652 932 649
680 400 760 440 790 462;790 462 855 528;745 121 775 138 835 177 905 233 930 248 995 320 1063 347;767 254 865 380
865 380 950 533 975 617 1050 730 1100 805 1153 867;893 252 1038 508;778 0 795 12;790 0 795 12 830 40 855 50 895 100 940 155 1000 238
1000 238 1033 310;833 8 880 47;850 0 870 45 895 95;895 88 912 97;870 0 910 100 920 130;880 0 915 100;902 40 923 17 943 10
925 5 975 28 987 38 1023 51;1053 0 1065 25;1075 0 1095 45 1102 75 1123 122;1165 5 1213 37;1120 137 1187 96 1215 94
920 123 955 124 1000 142 1030 147 1100 146 1125 150 1145 185;1145 185 1165 210 1187 249;950 127 990 160 978 184
1058 175 1080 180 1120 207 1172 226;1080 180 1135 230 1172 258;1037 257 1033 285;1030 315 1050 313 1100 330 1145 372 1215 423
1103 335 1160 341 1215 353;1163 341 1145 370;995 320 1018 400 1038 485;1025 335 1065 373;1040 323 1075 400 1087 440
1095 397 1130 455;1130 455 1165 510 1175 560;1087 490 1107 517 1165 545 1185 575 1215 597;987 523 1010 533 1057 585 1070 620 1078 657
975 583 1030 633 1078 657;1078 657 1105 713;1048 545 1075 558 1120 605 1145 645 1155 690 1177 728;1115 578 1170 620 1190 650 1215 694` }
];

const traces = document.getElementById('traces');
for (const { origin, traces: source } of QUADRANTS) {
  const group = document.createElementNS(NS, 'g');
  group.setAttribute('transform', `translate(${origin}) scale(${1 / 3})`);
  traces.appendChild(group);
  for (const trace of source.trim().split(/[;\n]/)) {
    const p = trace.trim().split(/\s+/).map(Number);
    for (let i = 0; i + 3 < p.length; i += 2) {
      const [x1, y1, x2, y2] = p.slice(i, i + 4);
      add(group, 'line', { x1, y1, x2, y2, stroke: colour(slip(x2 - x1, y2 - y1)) });
    }
  }
}

const grid = document.getElementById('grid');
const labels = document.getElementById('labels');
for (let v = 0; v <= 200; v += 50) {
  const x = 403.5 + v * 3.12;
  add(grid, 'line', { class: 'grid-line', x1: x, x2: x, y1: 65, y2: 655 });
  add(grid, 'line', { class: 'tick', x1: x, x2: x, y1: 656, y2: 660 });
  add(labels, 'text', { x, y: 674 }, v);
}
for (let v = 0; v <= 175; v += 25) {
  const y = 75.5 + v * 3.12;
  add(grid, 'line', { class: 'grid-line', x1: 389, x2: 1171, y1: y, y2: y });
  add(grid, 'line', { class: 'tick', x1: 383, x2: 388, y1: y, y2: y });
  add(labels, 'text', { class: 'end', x: 379, y: y + 4 }, v);
}
for (let i = 0; i <= 5; i++) {
  const x = 388.5 + i * 156.6;
  add(grid, 'line', { class: 'tick', x1: x, x2: x, y1: 744, y2: 748 });
  add(labels, 'text', { x, y: 763 }, (i / 5).toFixed(1));
}
RAMP.forEach((c, i) => add(document.getElementById('ramp'), 'stop', { offset: i / 20, 'stop-color': c }));
```
